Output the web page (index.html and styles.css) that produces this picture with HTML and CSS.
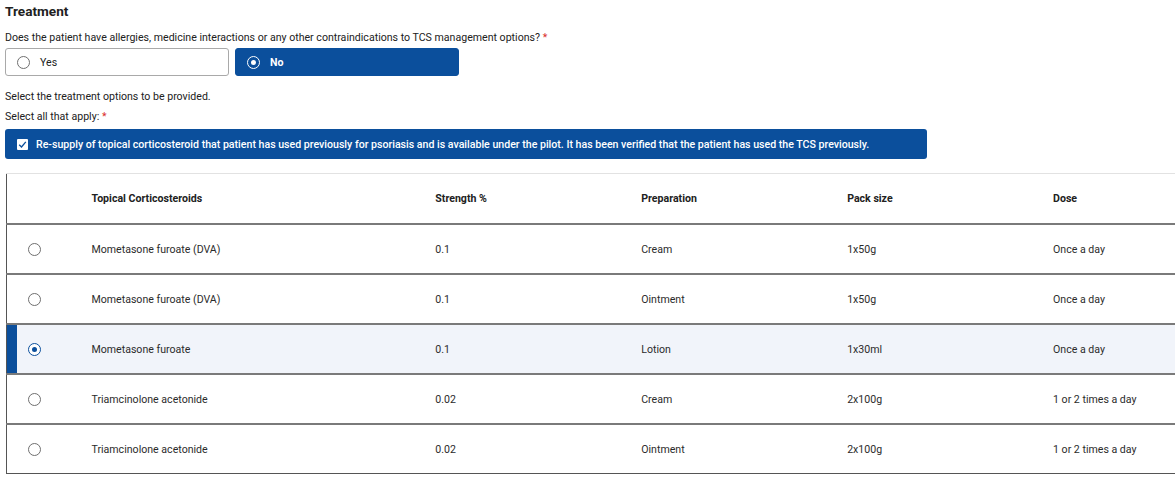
FILE: index.html
```html
<!DOCTYPE html>
<html lang="en">
<head>
    <meta charset="UTF-8">
    <title>Treatment</title>
    <link rel="stylesheet" href="styles.css">
</head>
<body>
    <div class="page">
        <h2 class="section-title">Treatment</h2>
        <p class="question">Does the patient have allergies, medicine interactions or any other contraindications to TCS management options? <span class="req">*</span></p>
        <div class="choice-row">
            <label class="choice">
                <span class="radio"></span>
                <span>Yes</span>
            </label>
            <label class="choice selected">
                <span class="radio checked"></span>
                <span>No</span>
            </label>
        </div>

        <p class="hint first">Select the treatment options to be provided.</p>
        <p class="hint">Select all that apply: <span class="req">*</span></p>
        <label class="check-banner">
            <span class="checkbox">
                <svg width="9" height="9" viewBox="0 0 9 9"><path d="M1.2 4.8 L3.5 7 L7.8 1.8" fill="none" stroke="#0b4f9c" stroke-width="1.3"/></svg>
            </span>
            <span>Re-supply of topical corticosteroid that patient has used previously for psoriasis and is available under the pilot. It has been verified that the patient has used the TCS previously.</span>
        </label>

        <table class="tcs-table">
            <colgroup>
                <col style="width:85px">
                <col style="width:344px">
                <col style="width:206px">
                <col style="width:206px">
                <col style="width:206px">
                <col style="width:122px">
            </colgroup>
            <thead>
                <tr>
                    <th></th>
                    <th>Topical Corticosteroids</th>
                    <th>Strength %</th>
                    <th>Preparation</th>
                    <th>Pack size</th>
                    <th>Dose</th>
                </tr>
            </thead>
            <tbody>
                <tr>
                    <td class="pick"><span class="radio"></span></td>
                    <td>Mometasone furoate (DVA)</td>
                    <td>0.1</td>
                    <td>Cream</td>
                    <td>1x50g</td>
                    <td>Once a day</td>
                </tr>
                <tr>
                    <td class="pick"><span class="radio"></span></td>
                    <td>Mometasone furoate (DVA)</td>
                    <td>0.1</td>
                    <td>Ointment</td>
                    <td>1x50g</td>
                    <td>Once a day</td>
                </tr>
                <tr class="active">
                    <td class="pick"><span class="radio checked"></span></td>
                    <td>Mometasone furoate</td>
                    <td>0.1</td>
                    <td>Lotion</td>
                    <td>1x30ml</td>
                    <td>Once a day</td>
                </tr>
                <tr>
                    <td class="pick"><span class="radio"></span></td>
                    <td>Triamcinolone acetonide</td>
                    <td>0.02</td>
                    <td>Cream</td>
                    <td>2x100g</td>
                    <td>1 or 2 times a day</td>
                </tr>
                <tr>
                    <td class="pick"><span class="radio"></span></td>
                    <td>Triamcinolone acetonide</td>
                    <td>0.02</td>
                    <td>Ointment</td>
                    <td>2x100g</td>
                    <td>1 or 2 times a day</td>
                </tr>
            </tbody>
        </table>
    </div>
</body>
</html>
```

FILE: styles.css
```css
body {
    margin: 0;
    font-family: Roboto, 'Liberation Sans', Arial, sans-serif;
    color: #212121;
    background: #fff;
    overflow: hidden;
}
.page {
    padding: 3px 0 0 5px;
}
.section-title {
    font-size: 13.6px;
    font-weight: 700;
    margin: 0 0 11px 0;
    line-height: 17px;
}
.question {
    font-size: 10.6px;
    margin: 0 0 3px 0;
    line-height: 14px;
}
.req {
    color: #d9302c;
}
.choice-row {
    display: flex;
    gap: 6px;
}
.choice {
    width: 224px;
    height: 28px;
    box-sizing: border-box;
    border: 1px solid #a9a9a9;
    border-radius: 3px;
    display: flex;
    align-items: center;
    gap: 10px;
    padding-left: 11px;
    font-size: 10.6px;
}
.choice.selected {
    background: #0b4f9c;
    border-color: #0b4f9c;
    color: #fff;
    font-weight: 700;
}
.radio {
    width: 13px;
    height: 13px;
    box-sizing: border-box;
    border: 1px solid #6f6f6f;
    border-radius: 50%;
    display: inline-block;
    position: relative;
    background: #fff;
}
.radio.checked {
    border-color: #0b4f9c;
}
.radio.checked::after {
    content: '';
    position: absolute;
    top: 3px; left: 3px;
    width: 5px; height: 5px;
    border-radius: 50%;
    background: #0b4f9c;
}
.choice.selected .radio {
    background: transparent;
    border-color: #fff;
}
.choice.selected .radio::after {
    background: #fff;
}
.hint {
    font-size: 10.6px;
    line-height: 14px;
    margin: 6px 0 0 0;
}
.hint.first {
    margin-top: 14px;
}
.check-banner {
    margin-top: 5px;
    width: 922px;
    height: 30px;
    box-sizing: border-box;
    background: #0b4f9c;
    border-radius: 3px;
    color: #fff;
    font-size: 10.6px;
    font-weight: 500;
    display: flex;
    align-items: center;
    gap: 8px;
    padding-left: 12px;
}
.checkbox {
    width: 11px;
    height: 11px;
    background: #fff;
    border-radius: 1px;
    display: flex;
    align-items: center;
    justify-content: center;
}
.tcs-table {
    margin-top: 14px;
    margin-left: 1px;
    border-collapse: collapse;
    table-layout: fixed;
    font-size: 10.6px;
    color: #2b2b2b;
    border-left: 1px solid #555;
    border-top: 1px solid #e2e2e2;
}
.tcs-table th {
    text-align: left;
    font-weight: 700;
    color: #212121;
    height: 49px;
    padding: 0;
    border-bottom: 2px solid #7a7a7a;
}
.tcs-table td {
    height: 48px;
    padding: 0;
    border-bottom: 2px solid #7a7a7a;
}
.tcs-table tbody tr:last-child td {
    border-bottom: 1px solid #555;
}
.tcs-table td.pick {
    padding-left: 21px;
    line-height: 0;
}
.tcs-table tr.active td {
    background: #f1f4fa;
}
.tcs-table tr.active td.pick {
    box-shadow: inset 10px 0 0 #0b4f9c;
}
```
